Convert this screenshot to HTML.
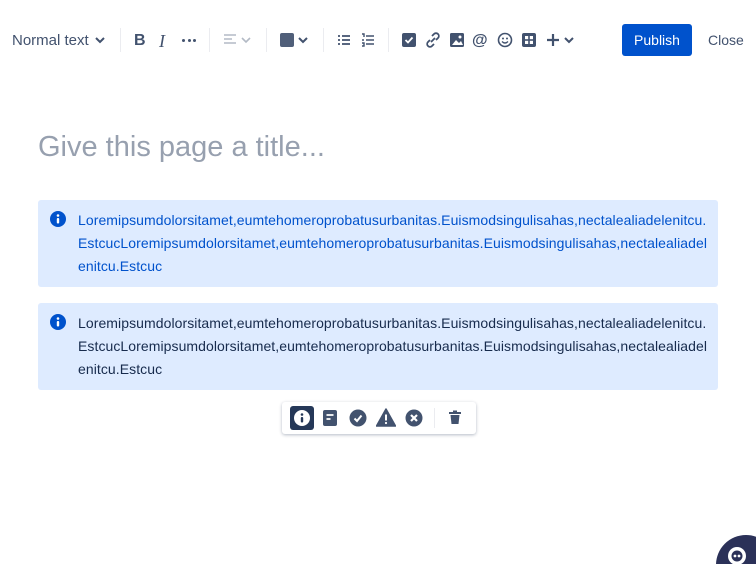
<!DOCTYPE html>
<html style="overflow:hidden;height:564px"><head><meta charset="utf-8"><style>
*{margin:0;padding:0;box-sizing:border-box}
body{width:756px;height:564px;background:#fff;font-family:"Liberation Sans",sans-serif;position:relative;overflow:hidden;color:#172b4d}
.a{position:absolute}
.tb{color:#42526e}
.sep{position:absolute;top:28px;width:1px;height:24px;background:#ebecf0}
.panel{position:absolute;left:38px;width:680px;height:87px;background:#deebff;border-radius:3px}
.panel .t{position:absolute;left:40px;top:9px;font-size:14px;line-height:23px;white-space:nowrap;letter-spacing:0.07px}
.panel svg{position:absolute;left:12px;top:11px}
</style></head><body>
<div class="a tb" style="left:12px;top:32px;font-size:15px">Normal text</div>
<svg class="a" style="left:94px;top:35px" width="12" height="10" viewBox="0 0 12 10"><path d="M2 3l4 4 4-4" stroke="#42526e" stroke-width="2" fill="none"/></svg>
<div class="sep" style="left:120px"></div>
<div class="a" style="left:134px;top:32px;font-size:16px;font-weight:bold;color:#42526e">B</div>
<div class="a" style="left:159px;top:31px;font-size:18px;font-style:italic;font-family:'Liberation Serif';color:#42526e">I</div>
<div class="a" style="left:182px;top:39px;width:16px;display:flex;gap:2.5px"><i style="width:3px;height:3px;background:#42526e;border-radius:50%"></i><i style="width:3px;height:3px;background:#42526e;border-radius:50%"></i><i style="width:3px;height:3px;background:#42526e;border-radius:50%"></i></div>
<div class="sep" style="left:209px"></div>
<svg class="a" style="left:222px;top:33px" width="32" height="14"><path d="M2 2h12M2 6h8M2 10h12" stroke="#b3bac5" stroke-width="1.6"/><path d="M20 5l4 4 4-4" stroke="#b3bac5" stroke-width="1.6" fill="none"/></svg>
<div class="sep" style="left:266px"></div>
<div class="a" style="left:280px;top:33px;width:14px;height:14px;background:#505f79;border-radius:2px"></div>
<svg class="a" style="left:298px;top:35px" width="10" height="10"><path d="M1 3l4 4 4-4" stroke="#42526e" stroke-width="2" fill="none"/></svg>
<div class="sep" style="left:323px"></div>
<svg class="a" style="left:337px;top:33px" width="14" height="14"><path d="M1 3h2M5 3h8M1 7h2M5 7h8M1 11h2M5 11h8" stroke="#42526e" stroke-width="1.8"/></svg>
<svg class="a" style="left:361px;top:33px" width="14" height="14"><path d="M1 1h2v3M5 3h8M5 7h8M5 11h8M1 7h2M1 10h2v3H1" stroke="#42526e" stroke-width="1.4" fill="none"/></svg>
<div class="sep" style="left:388px"></div>
<svg class="a" style="left:402px;top:33px" width="14" height="14"><rect x="0" y="0" width="14" height="14" rx="2" fill="#42526e"/><path d="M3.5 7l2.5 2.5 4.5-5" stroke="#fff" stroke-width="1.8" fill="none"/></svg>
<svg class="a" style="left:425px;top:32px" width="16" height="16"><path d="M6 10l4-4M7 4l2-2a2.5 2.5 0 014 4l-2 2M9 12l-2 2a2.5 2.5 0 01-4-4l2-2" stroke="#42526e" stroke-width="1.8" fill="none"/></svg>
<svg class="a" style="left:450px;top:33px" width="14" height="14"><rect width="14" height="14" rx="1.5" fill="#42526e"/><circle cx="10" cy="4" r="1.5" fill="#fff"/><path d="M2 12l4-5 3 3 2-2 2 4z" fill="#fff"/></svg>
<div class="a" style="left:472px;top:32px;font-size:16px;font-weight:bold;color:#42526e">@</div>
<svg class="a" style="left:497px;top:32px" width="16" height="16"><circle cx="8" cy="8" r="6.5" stroke="#42526e" stroke-width="1.6" fill="none"/><circle cx="6" cy="6.5" r="1" fill="#42526e"/><circle cx="10" cy="6.5" r="1" fill="#42526e"/><path d="M5 9.5q3 3 6 0" stroke="#42526e" stroke-width="1.4" fill="none"/></svg>
<svg class="a" style="left:522px;top:33px" width="14" height="14"><rect width="14" height="14" rx="2" fill="#42526e"/><rect x="3" y="3" width="3.2" height="3.2" fill="#fff"/><rect x="7.8" y="3" width="3.2" height="3.2" fill="#fff"/><rect x="3" y="7.8" width="3.2" height="3.2" fill="#fff"/><rect x="7.8" y="7.8" width="3.2" height="3.2" fill="#fff"/></svg>
<svg class="a" style="left:545px;top:32px" width="30" height="16"><path d="M8 2v12M2 8h12" stroke="#42526e" stroke-width="2.2"/><path d="M20 6l4 4 4-4" stroke="#42526e" stroke-width="2" fill="none"/></svg>
<div class="a" style="left:622px;top:24px;width:70px;height:32px;background:#0052cc;border-radius:3px;color:#fff;font-size:14px;line-height:32px;text-align:center">Publish</div>
<div class="a tb" style="left:708px;top:32px;font-size:14px">Close</div>

<div class="a" style="left:38px;top:131px;font-size:29px;color:#97a0af">Give this page a title...</div>

<div class="panel" style="top:200px">
<svg width="16" height="16"><circle cx="8" cy="8" r="8" fill="#0052cc"/><circle cx="8" cy="4.5" r="1.3" fill="#fff"/><rect x="6.8" y="7" width="2.4" height="5.5" rx="1" fill="#fff"/></svg>
<div class="t" style="color:#0052cc">Loremipsumdolorsitamet,eumtehomeroprobatusurbanitas.Euismodsingulisahas,nectalealiadelenitcu.<br>EstcucLoremipsumdolorsitamet,eumtehomeroprobatusurbanitas.Euismodsingulisahas,nectalealiadel<br>enitcu.Estcuc</div>
</div>
<div class="panel" style="top:303px">
<svg width="16" height="16"><circle cx="8" cy="8" r="8" fill="#0052cc"/><circle cx="8" cy="4.5" r="1.3" fill="#fff"/><rect x="6.8" y="7" width="2.4" height="5.5" rx="1" fill="#fff"/></svg>
<div class="t" style="color:#172b4d">Loremipsumdolorsitamet,eumtehomeroprobatusurbanitas.Euismodsingulisahas,nectalealiadelenitcu.<br>EstcucLoremipsumdolorsitamet,eumtehomeroprobatusurbanitas.Euismodsingulisahas,nectalealiadel<br>enitcu.Estcuc</div>
</div>

<div class="a" style="left:282px;top:402px;width:194px;height:32px;background:#fff;border-radius:3px;box-shadow:0 1px 3px rgba(9,30,66,.3)"></div>
<div class="a" style="left:290px;top:406px;width:24px;height:24px;background:#253858;border-radius:3px"></div>
<svg class="a" style="left:293px;top:409px" width="18" height="18"><circle cx="9" cy="9" r="8" fill="#fff"/><circle cx="9" cy="5.5" r="1.3" fill="#253858"/><rect x="7.8" y="8" width="2.4" height="5.5" rx="1" fill="#253858"/></svg>
<svg class="a" style="left:323px;top:409px" width="14" height="18"><rect x="0" y="1" width="14" height="16" rx="2" fill="#42526e"/><path d="M3.5 6h7M3.5 10h4" stroke="#fff" stroke-width="1.8"/></svg>
<svg class="a" style="left:349px;top:409px" width="18" height="18"><circle cx="9" cy="9" r="8.5" fill="#42526e"/><path d="M5.5 9.5l2.5 2.5 4.5-5.5" stroke="#fff" stroke-width="2" fill="none"/></svg>
<svg class="a" style="left:376px;top:408px" width="20" height="19"><path d="M10 1L19.5 18H0.5z" fill="#42526e" stroke="#42526e" stroke-linejoin="round" stroke-width="1.5"/><rect x="9" y="6.5" width="2" height="6" fill="#fff"/><circle cx="10" cy="15" r="1.1" fill="#fff"/></svg>
<svg class="a" style="left:405px;top:409px" width="18" height="18"><circle cx="9" cy="9" r="8.5" fill="#42526e"/><path d="M6 6l6 6M12 6l-6 6" stroke="#fff" stroke-width="2.2"/></svg>
<div class="a" style="left:434px;top:408px;width:1px;height:20px;background:#ebecf0"></div>
<svg class="a" style="left:448px;top:410px" width="14" height="16"><rect x="1" y="2" width="12" height="2" fill="#42526e"/><rect x="5" y="0.5" width="4" height="2" fill="#42526e"/><path d="M2.5 5h9l-1 9h-7z" fill="#42526e"/></svg>

<div class="a" style="left:716px;top:535px;width:40px;height:29px;overflow:hidden">
<div style="position:absolute;left:0;top:0;width:60px;height:60px;border-radius:50%;background:#2b3158"></div>
<svg style="position:absolute;left:8px;top:8px" width="26" height="21"><circle cx="13" cy="13" r="9" fill="#fff"/><circle cx="13" cy="13" r="5.5" fill="#2b3158"/><circle cx="11" cy="13" r="1.4" fill="#fff"/><circle cx="15" cy="13" r="1.4" fill="#fff"/></svg>
</div>
</body></html>
